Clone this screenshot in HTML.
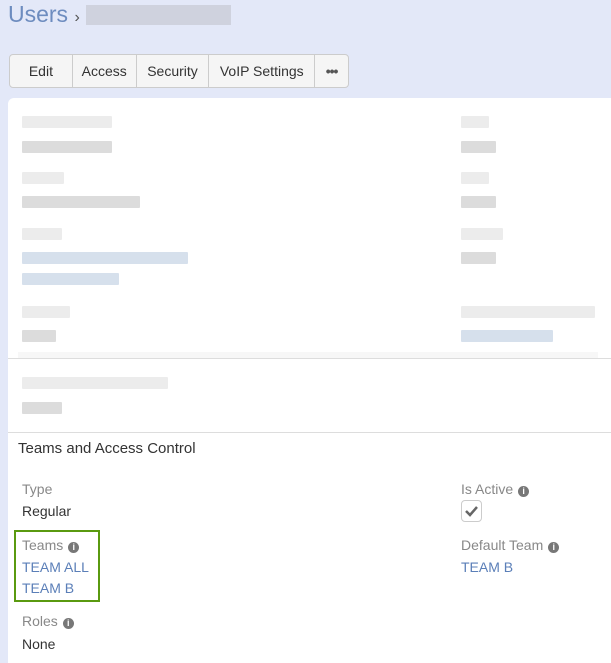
<!DOCTYPE html>
<html><head><style>
*{margin:0;padding:0;box-sizing:border-box}
body{width:611px;height:663px;background:#e3e8f8;font-family:"Liberation Sans",sans-serif;position:relative;overflow:hidden;font-size:14px}
.a{position:absolute;white-space:nowrap}
.title{left:8px;top:1px;font-size:23px;color:#6d8cbf}
.btns{left:9px;top:54px;width:340px;height:34px;border:1px solid #ccc;border-radius:4px;background:#f5f5f5;display:flex}
.btns div{height:100%;display:flex;align-items:center;justify-content:center;border-right:1px solid #ccc;color:#333;font-size:14px}
.btns div:last-child{border-right:none}
.panel{left:8px;top:98px;width:603px;height:565px;background:#fff;border-top-left-radius:6px}
.bl{position:absolute;height:12px;border-radius:1px}
.g{background:#ececec}.d{background:#dcdcdc}.b{background:#d6e0ec}
.lab{color:#888;font-size:14px}
.val{color:#333;font-size:14px}
.lnk{color:#5b7fb8;font-size:14px}
.ic{display:inline-block;width:11px;height:11px;border-radius:50%;background:#777;color:#fff;font-size:9px;line-height:11px;text-align:center;font-weight:bold;vertical-align:0px;margin-left:5px}
</style></head><body>
<div class="a title">Users <span style="font-size:16px;color:#555">›</span> <span style="display:inline-block;width:145px;height:20px;background:#cfd2de;vertical-align:-3px"></span></div>
<div class="a btns"><div style="width:63px">Edit</div><div style="width:64px">Access</div><div style="width:73px">Security</div><div style="width:106px">VoIP Settings</div><div style="width:33px;font-weight:bold;color:#555;letter-spacing:-1px">•••</div></div>
<div class="a panel"></div>
<div class="bl g" style="left:22px;top:116px;width:90px"></div>
<div class="bl d" style="left:22px;top:141px;width:90px"></div>
<div class="bl g" style="left:22px;top:172px;width:42px"></div>
<div class="bl d" style="left:22px;top:196px;width:118px"></div>
<div class="bl g" style="left:22px;top:228px;width:40px"></div>
<div class="bl b" style="left:22px;top:252px;width:166px"></div>
<div class="bl b" style="left:22px;top:273px;width:97px"></div>
<div class="bl g" style="left:22px;top:306px;width:48px"></div>
<div class="bl d" style="left:22px;top:330px;width:34px"></div>
<div class="bl g" style="left:461px;top:116px;width:28px"></div>
<div class="bl d" style="left:461px;top:141px;width:35px"></div>
<div class="bl g" style="left:461px;top:172px;width:28px"></div>
<div class="bl d" style="left:461px;top:196px;width:35px"></div>
<div class="bl g" style="left:461px;top:228px;width:42px"></div>
<div class="bl d" style="left:461px;top:252px;width:35px"></div>
<div class="bl g" style="left:461px;top:306px;width:134px"></div>
<div class="bl b" style="left:461px;top:330px;width:92px"></div>
<div class="a" style="left:18px;top:352px;width:580px;height:7px;background:#f7f7f7"></div>
<div class="a" style="left:8px;top:358px;width:603px;height:1px;background:#ddd"></div>
<div class="bl g" style="left:22px;top:377px;width:146px"></div>
<div class="bl d" style="left:22px;top:402px;width:40px"></div>
<div class="a" style="left:8px;top:432px;width:603px;height:1px;background:#ddd"></div>
<div class="a val" style="left:18px;top:440px;font-size:15px">Teams and Access Control</div>
<div class="a lab" style="left:22px;top:481px">Type</div>
<div class="a val" style="left:22px;top:503px">Regular</div>
<div class="a" style="left:14px;top:530px;width:86px;height:72px;border:2px solid #5a9a10"></div>
<div class="a lab" style="left:22px;top:537px">Teams<span class="ic">i</span></div>
<div class="a lnk" style="left:22px;top:559px">TEAM ALL</div>
<div class="a lnk" style="left:22px;top:580px">TEAM B</div>
<div class="a lab" style="left:22px;top:613px">Roles<span class="ic">i</span></div>
<div class="a val" style="left:22px;top:636px">None</div>
<div class="a lab" style="left:461px;top:481px">Is Active<span class="ic">i</span></div>
<div class="a" style="left:461px;top:500px;width:21px;height:22px;border:1px solid #ccc;border-radius:4px;background:#fff"><svg width="19" height="20" viewBox="0 0 19 20"><path d="M4 10 L8 14 L15 6" stroke="#666" stroke-width="2.5" fill="none"/></svg></div>
<div class="a lab" style="left:461px;top:537px">Default Team<span class="ic">i</span></div>
<div class="a lnk" style="left:461px;top:559px">TEAM B</div>
</body></html>
